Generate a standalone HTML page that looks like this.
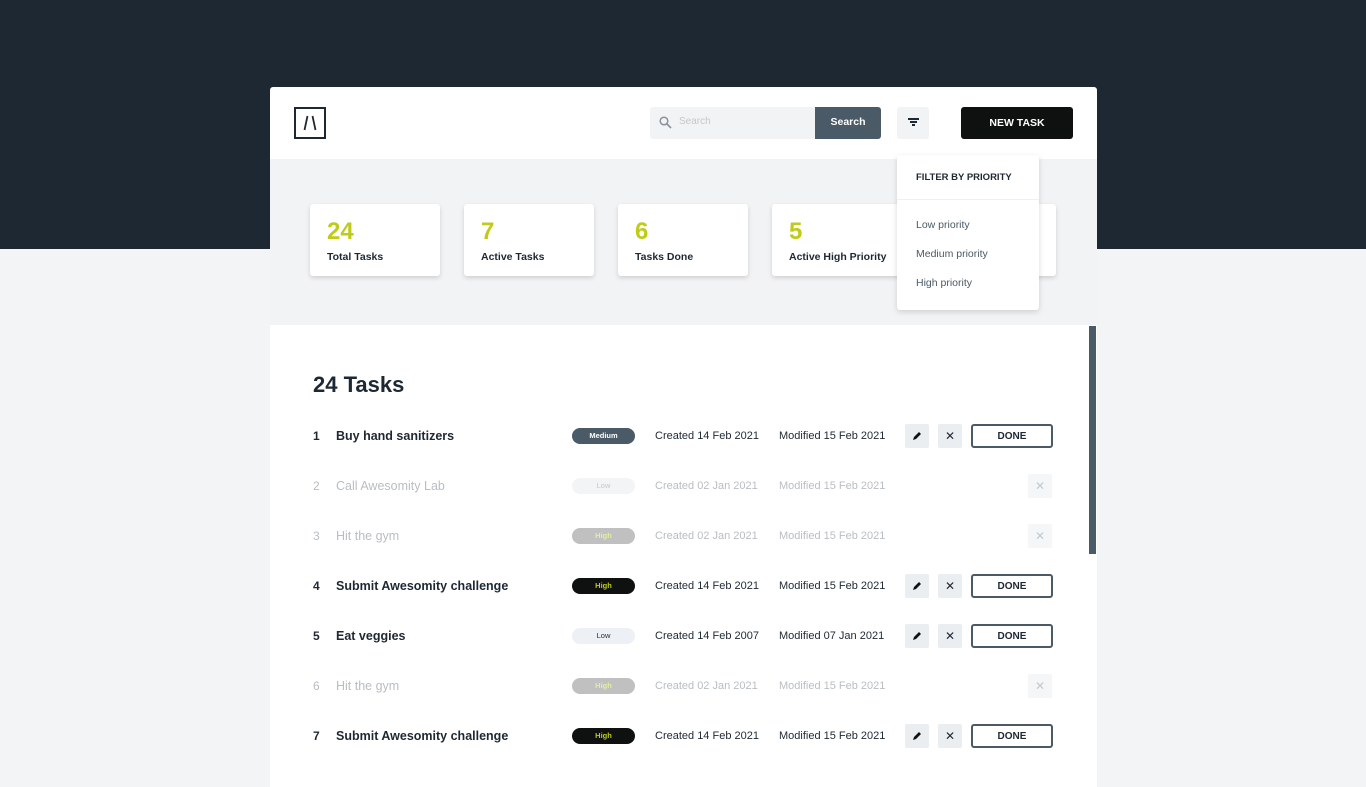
<!DOCTYPE html>
<html><head><meta charset="utf-8"><style>
*{box-sizing:border-box;margin:0;padding:0}
body{width:1366px;height:768px;overflow:hidden;background:#f3f4f6;font-family:"Liberation Sans",sans-serif;position:relative}
.top{position:absolute;left:0;top:0;width:1366px;height:249px;background:#1e2833}
.card{position:absolute;left:270px;top:87px;width:827px;height:700px;background:#fff;border-radius:3px 3px 0 0;overflow:hidden}
.a{position:absolute}
.gray{position:absolute;left:0;top:72px;width:827px;height:166px;background:#f2f3f5}
.stat{position:absolute;top:117px;width:130px;height:72px;background:#fff;border-radius:3px;box-shadow:0 2px 5px rgba(0,0,0,.15)}
.stat b{position:absolute;left:17px;top:14px;font-size:24px;color:#bfcb18;font-weight:bold}
.stat span{position:absolute;left:17px;top:47px;font-size:10.5px;font-weight:bold;color:#1e2833;white-space:nowrap}
.row{position:absolute;left:0;width:827px;height:24px;font-size:11px;color:#1e2833}
.row .n{position:absolute;left:43px;top:5px;font-size:12px;font-weight:bold}
.row .t{position:absolute;left:66px;top:5px;font-size:12.5px;font-weight:bold}
.row .bd{position:absolute;left:302px;top:4px;width:63px;height:16px;border-radius:8px;font-size:7.5px;font-weight:bold;text-align:center;line-height:16px}
.row .c{position:absolute;left:385px;top:6px}
.row .m{position:absolute;left:509px;top:6px}
.ib{position:absolute;top:0;width:24px;height:24px;background:#ebeef1;border-radius:2px;display:flex;align-items:center;justify-content:center;font-size:12px}
.done{position:absolute;left:701px;top:0;width:82px;height:24px;border:2px solid #4a5a66;border-radius:3px;font-size:10px;font-weight:bold;display:flex;align-items:center;justify-content:center}
.faded{color:#b9bec3}
.faded .n,.faded .t{font-weight:normal}
</style></head><body>
<div class="top"></div>
<div class="card">
 <div class="a" style="left:24px;top:20px;width:32px;height:32px;border:2px solid #1e2833"></div>
 <svg class="a" style="left:24px;top:20px" width="32" height="32" viewBox="0 0 32 32"><path d="M13.5 9L10.5 23M18.5 9L21.5 23" stroke="#1e2833" stroke-width="1.8"/></svg>
 <div class="a" style="left:380px;top:20px;width:166px;height:32px;background:#f2f3f5;border-radius:3px 0 0 3px"></div>
 <svg class="a" style="left:389px;top:29px" width="13" height="13" viewBox="0 0 13 13"><circle cx="5" cy="5" r="3.8" fill="none" stroke="#8a929a" stroke-width="1.5"/><path d="M8 8l4 4" stroke="#8a929a" stroke-width="1.6"/></svg>
 <div class="a" style="left:409px;top:29px;font-size:10px;color:#c4c8cc">Search</div>
 <div class="a" style="left:545px;top:20px;width:66px;height:32px;background:#4a5a66;border-radius:0 3px 3px 0;color:#fff;font-size:10.5px;font-weight:bold;text-align:center;line-height:31px">Search</div>
 <div class="a" style="left:627px;top:20px;width:32px;height:32px;background:#f2f3f5;border-radius:3px"></div>
 <div class="a" style="left:638px;top:31px;width:11px;height:1.5px;background:#1e2833"></div>
 <div class="a" style="left:640px;top:34px;width:7px;height:1.5px;background:#1e2833"></div>
 <div class="a" style="left:642px;top:37px;width:3px;height:1.5px;background:#1e2833"></div>
 <div class="a" style="left:691px;top:20px;width:112px;height:32px;background:#0f1111;border-radius:3px;color:#fff;font-size:10.5px;font-weight:bold;text-align:center;line-height:32px">NEW TASK</div>
 <div class="gray"></div>
 <div class="stat" style="left:40px"><b>24</b><span>Total Tasks</span></div>
 <div class="stat" style="left:194px"><b>7</b><span>Active Tasks</span></div>
 <div class="stat" style="left:348px"><b>6</b><span>Tasks Done</span></div>
 <div class="stat" style="left:502px"><b>5</b><span>Active High Priority</span></div>
 <div class="stat" style="left:656px"><b>3</b><span>Done High Priority</span></div>
 <div class="a" style="left:627px;top:68px;width:142px;height:155px;background:#fff;border-radius:3px;box-shadow:0 2px 6px rgba(0,0,0,.15)">
  <div class="a" style="left:19px;top:17px;font-size:9.5px;font-weight:bold;color:#1e2833">FILTER BY PRIORITY</div>
  <div class="a" style="left:0;top:44px;width:142px;height:1px;background:#eef0f2"></div>
  <div class="a" style="left:19px;top:64px;font-size:10.5px;color:#4a5a66">Low priority</div>
  <div class="a" style="left:19px;top:93px;font-size:10.5px;color:#4a5a66">Medium priority</div>
  <div class="a" style="left:19px;top:122px;font-size:10.5px;color:#4a5a66">High priority</div>
 </div>
 <div class="a" style="left:819px;top:239px;width:7px;height:228px;background:#4a5a66"></div>
 <div class="a" style="left:43px;top:285px;font-size:22px;font-weight:bold;color:#1e2833">24 Tasks</div>

 <div class="row" style="top:337px"><span class="n">1</span><span class="t">Buy hand sanitizers</span><span class="bd" style="background:#4a5a66;color:#fff">Medium</span><span class="c">Created 14 Feb 2021</span><span class="m">Modified 15 Feb 2021</span><span class="ib" style="left:635px"><svg width="10" height="10" viewBox="0 0 10 10"><path d="M1 9l1-3 5-5 2 2-5 5z" fill="#111"/></svg></span><span class="ib" style="left:668px">✕</span><span class="done">DONE</span></div>
 <div class="row faded" style="top:387px"><span class="n">2</span><span class="t">Call Awesomity Lab</span><span class="bd" style="background:#f3f4f6;color:#c4c8cc;font-weight:normal">Low</span><span class="c">Created 02 Jan 2021</span><span class="m">Modified 15 Feb 2021</span><span class="ib" style="left:758px;background:#f5f6f8;color:#c4c8cc">✕</span></div>
 <div class="row faded" style="top:437px"><span class="n">3</span><span class="t">Hit the gym</span><span class="bd" style="background:#c0c0c0;color:#e4eca0">High</span><span class="c">Created 02 Jan 2021</span><span class="m">Modified 15 Feb 2021</span><span class="ib" style="left:758px;background:#f5f6f8;color:#c4c8cc">✕</span></div>
 <div class="row" style="top:487px"><span class="n">4</span><span class="t">Submit Awesomity challenge</span><span class="bd" style="background:#0f1111;color:#bfcb18">High</span><span class="c">Created 14 Feb 2021</span><span class="m">Modified 15 Feb 2021</span><span class="ib" style="left:635px"><svg width="10" height="10" viewBox="0 0 10 10"><path d="M1 9l1-3 5-5 2 2-5 5z" fill="#111"/></svg></span><span class="ib" style="left:668px">✕</span><span class="done">DONE</span></div>
 <div class="row" style="top:537px"><span class="n">5</span><span class="t">Eat veggies</span><span class="bd" style="background:#edf0f4;color:#1e2833;font-weight:normal">Low</span><span class="c">Created 14 Feb 2007</span><span class="m">Modified 07 Jan 2021</span><span class="ib" style="left:635px"><svg width="10" height="10" viewBox="0 0 10 10"><path d="M1 9l1-3 5-5 2 2-5 5z" fill="#111"/></svg></span><span class="ib" style="left:668px">✕</span><span class="done">DONE</span></div>
 <div class="row faded" style="top:587px"><span class="n">6</span><span class="t">Hit the gym</span><span class="bd" style="background:#c0c0c0;color:#e4eca0">High</span><span class="c">Created 02 Jan 2021</span><span class="m">Modified 15 Feb 2021</span><span class="ib" style="left:758px;background:#f5f6f8;color:#c4c8cc">✕</span></div>
 <div class="row" style="top:637px"><span class="n">7</span><span class="t">Submit Awesomity challenge</span><span class="bd" style="background:#0f1111;color:#bfcb18">High</span><span class="c">Created 14 Feb 2021</span><span class="m">Modified 15 Feb 2021</span><span class="ib" style="left:635px"><svg width="10" height="10" viewBox="0 0 10 10"><path d="M1 9l1-3 5-5 2 2-5 5z" fill="#111"/></svg></span><span class="ib" style="left:668px">✕</span><span class="done">DONE</span></div>
</div>
</body></html>
